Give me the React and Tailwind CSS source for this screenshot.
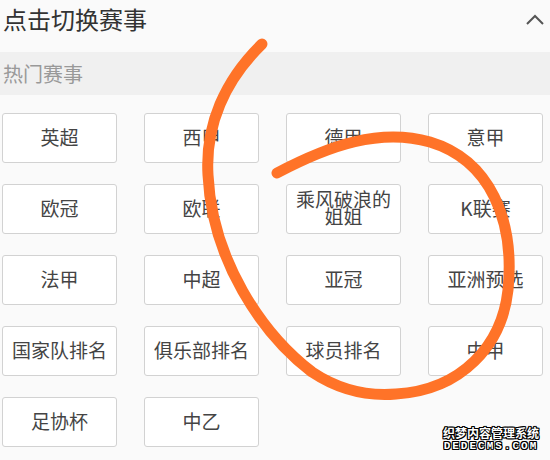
import React from "react";

const leagues = [
  "英超", "西甲", "德甲", "意甲",
  "欧冠", "欧联", "乘风破浪的姐姐", "K联赛",
  "法甲", "中超", "亚冠", "亚洲预选",
  "国家队排名", "俱乐部排名", "球员排名", "中甲",
  "足协杯", "中乙",
];

function App() {
  return (
    <div className="relative w-[550px] h-[460px] overflow-hidden bg-[#fafafa] font-['Noto_Sans_CJK_SC',sans-serif]">
      {/* header */}
      <div className="h-[52px] flex items-start justify-between pl-[3px] pr-[5px] pt-[3px]">
        <span className="text-[24px] leading-[32px] text-[#333]">点击切换赛事</span>
        <svg width="20" height="12" viewBox="0 0 20 12" className="mt-[11px]">
          <path d="M2 10 L10 2 L18 10" fill="none" stroke="#555" strokeWidth="2" />
        </svg>
      </div>

      {/* section title */}
      <div className="h-[43px] bg-[#f0f0f0] flex items-center pl-[3px]">
        <span className="text-[20px] text-[#999]">热门赛事</span>
      </div>

      {/* league grid */}
      <div className="grid grid-cols-[repeat(4,115px)] gap-x-[27px] gap-y-[21px] pl-[2px] mt-[18px]">
        {leagues.map((name) => (
          <div
            key={name}
            className="h-[50px] flex items-center justify-center px-2 pb-[4px] bg-white border border-[#d2d2d2] rounded-[3px] text-[19px] leading-[17px] text-[#444] text-center"
          >
            {name}
          </div>
        ))}
      </div>

      {/* hand-drawn circle */}
      <svg className="absolute inset-0 pointer-events-none" width="550" height="460">
        <path
          d="M262 44 C225 80, 205 125, 208 175 C212 260, 262 334, 312 372 C342 392, 372 396, 396 394 C462 390, 502 345, 508 290 C515 220, 490 160, 430 142 C380 128, 330 145, 277 173"
          fill="none"
          stroke="#ff7328"
          strokeWidth="11"
          strokeLinecap="round"
        />
      </svg>

      {/* watermark */}
      <div className="absolute right-[11px] bottom-[9px] flex flex-col items-center gap-[2px] text-white font-bold [text-shadow:1px_0_0_#000,-1px_0_0_#000,0_1px_0_#000,0_-1px_0_#000,1px_1px_0_#000,-1px_-1px_0_#000,1px_-1px_0_#000,-1px_1px_0_#000]">
        <span className="text-[12px] leading-[13px]">织梦内容管理系统</span>
        <span className="text-[11px] leading-[10px] tracking-[2px] font-['Liberation_Mono',monospace]">DEDECMS.COM</span>
      </div>
    </div>
  );
}

export default App;
